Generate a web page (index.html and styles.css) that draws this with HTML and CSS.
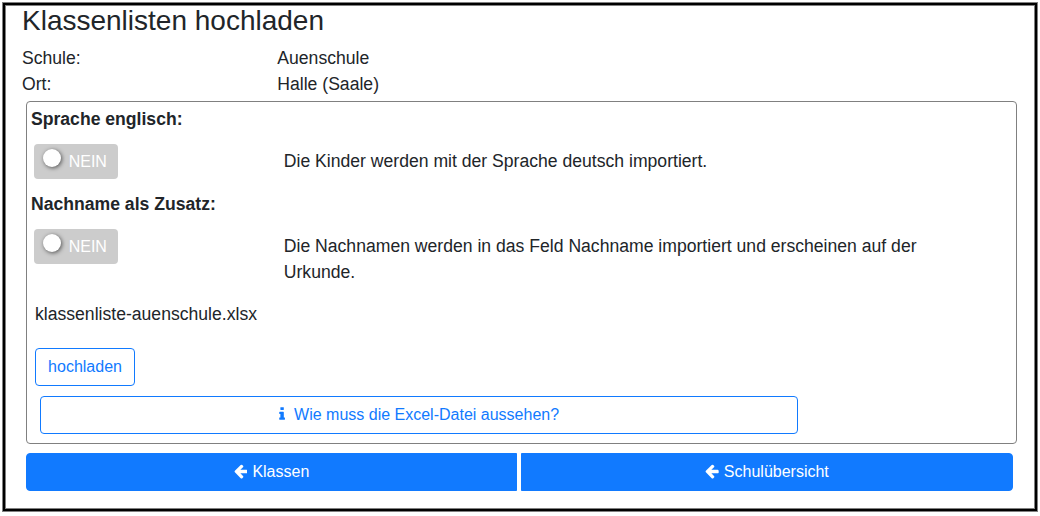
FILE: index.html
```html
<!DOCTYPE html>
<html lang="de">
<head>
<meta charset="utf-8">
<title>Klassenlisten hochladen</title>
<link rel="stylesheet" href="styles.css">
</head>
<body>
<main class="frame">
  <div class="content">
    <h1 class="title">Klassenlisten hochladen</h1>
    <dl class="details">
      <dt>Schule:</dt><dd>Auenschule</dd>
      <dt>Ort:</dt><dd>Halle (Saale)</dd>
    </dl>
    <section class="panel">
      <h2 class="option-title">Sprache englisch:</h2>
      <div class="option">
        <button class="toggle"><span class="knob"></span>NEIN</button>
        <p class="hint">Die Kinder werden mit der Sprache deutsch importiert.</p>
      </div>
      <h2 class="option-title">Nachname als Zusatz:</h2>
      <div class="option option-tall">
        <button class="toggle"><span class="knob"></span>NEIN</button>
        <p class="hint">Die Nachnamen werden in das Feld Nachname importiert und erscheinen auf der Urkunde.</p>
      </div>
      <p class="filename">klassenliste-auenschule.xlsx</p>
      <button class="btn btn-outline upload">hochladen</button>
      <button class="btn btn-outline help"><svg class="icon-info" viewBox="576 0 640 1792"><path d="M1216 1344v128q0 26-19 45t-45 19h-512q-26 0-45-19t-19-45v-128q0-26 19-45t45-19h64v-384h-64q-26 0-45-19t-19-45v-128q0-26 19-45t45-19h384q26 0 45 19t19 45v576h64q26 0 45 19t19 45zm-128-1152v192q0 26-19 45t-45 19h-256q-26 0-45-19t-19-45v-192q0-26 19-45t45-19h256q26 0 45 19t19 45z"/></svg>Wie muss die Excel-Datei aussehen?</button>
    </section>
    <nav class="actions">
      <button class="btn btn-primary first"><svg class="icon-arrow" viewBox="128 0 1536 1792"><path d="M1664 896v128q0 53-32.5 90.5t-84.5 37.5h-704l293 294q38 36 38 90t-38 90l-75 76q-37 37-90 37-52 0-91-37l-651-652q-37-37-37-90 0-52 37-91l651-650q38-38 91-38 52 0 90 38l75 74q38 38 38 91t-38 91l-293 293h704q52 0 84.5 37.5t32.5 90.5z"/></svg>Klassen</button>
      <button class="btn btn-primary last"><svg class="icon-arrow" viewBox="128 0 1536 1792"><path d="M1664 896v128q0 53-32.5 90.5t-84.5 37.5h-704l293 294q38 36 38 90t-38 90l-75 76q-37 37-90 37-52 0-91-37l-651-652q-37-37-37-90 0-52 37-91l651-650q38-38 91-38 52 0 90 38l75 74q38 38 38 91t-38 91l-293 293h704q52 0 84.5 37.5t32.5 90.5z"/></svg>Schulübersicht</button>
    </nav>
  </div>
</main>
</body>
</html>
```

FILE: styles.css
```css
* { box-sizing: border-box; }
body {
  margin: 0;
  padding: 2px;
  background: #fff;
  color: #212529;
  font: 17.6px/26px "Liberation Sans", Arial, sans-serif;
}
h1, h2, p, dl, dd { margin: 0; }
button { font: inherit; }
.frame {
  width: 1036px;
  height: 510px;
  padding: 2px;
  border: 1px solid #808080;
  outline: 2px solid #000;
  outline-offset: -3px;
}
.content {
  height: 504px;
  padding: 0 16px;
  border: 1px solid #808080;
}
.title { font-size: 28px; font-weight: 400; line-height: 34px; margin-top: -2px; }
.details { display: grid; grid-template-columns: 255.3px 1fr; margin-top: 7px; }
.panel {
  width: 991px;
  height: 343px;
  margin: 4px 0 0 4px;
  padding: 4px;
  border: 1px solid #808080;
  border-radius: 4px;
}
.option-title { font-size: 17.6px; font-weight: 700; line-height: 26px; }
.option {
  display: grid;
  grid-template-columns: 249.8px 652px;
  align-items: start;
  height: 59px;
  padding: 12px 0 0 3px;
}
.option-tall { height: 84px; }
.toggle {
  display: flex;
  align-items: center;
  width: 84px;
  height: 35px;
  padding: 0 0 0 9px;
  border: 0;
  border-radius: 4px;
  background: #ccc;
  color: #fff;
  font-size: 16px;
}
.knob {
  width: 18px;
  height: 18px;
  margin: -7px 7.7px 0 0;
  border-radius: 50%;
  background: #fff;
  box-shadow: 1px 1px 4px rgba(0, 0, 0, .6);
}
.hint { padding-top: 4px; }
.filename { margin: 0 0 21px 4px; }
.btn {
  display: flex;
  align-items: center;
  justify-content: center;
  height: 38px;
  padding: 0 0 1px;
  border: 1px solid #117aff;
  border-radius: 4px;
  font-size: 16px;
  line-height: 24px;
}
.btn-outline { background: #fff; color: #117aff; }
.upload { width: 100px; margin-left: 4px; }
.help { width: 758px; margin: 10px 0 0 9px; }
.actions {
  display: grid;
  grid-template-columns: 491px 492px;
  gap: 4px;
  margin: 9px 0 0 4px;
}
.btn-primary { background: #117aff; color: #fff; }
.first { border-radius: 4px 0 0 4px; }
.last { border-radius: 0 4px 4px 0; }
.icon-arrow, .icon-info { height: 16px; margin-bottom: 1px; fill: currentColor; }
.icon-arrow { width: 13.7px; margin-right: 5px; }
.icon-info { width: 6.2px; margin-right: 9px; margin-bottom: 2px; }
```
